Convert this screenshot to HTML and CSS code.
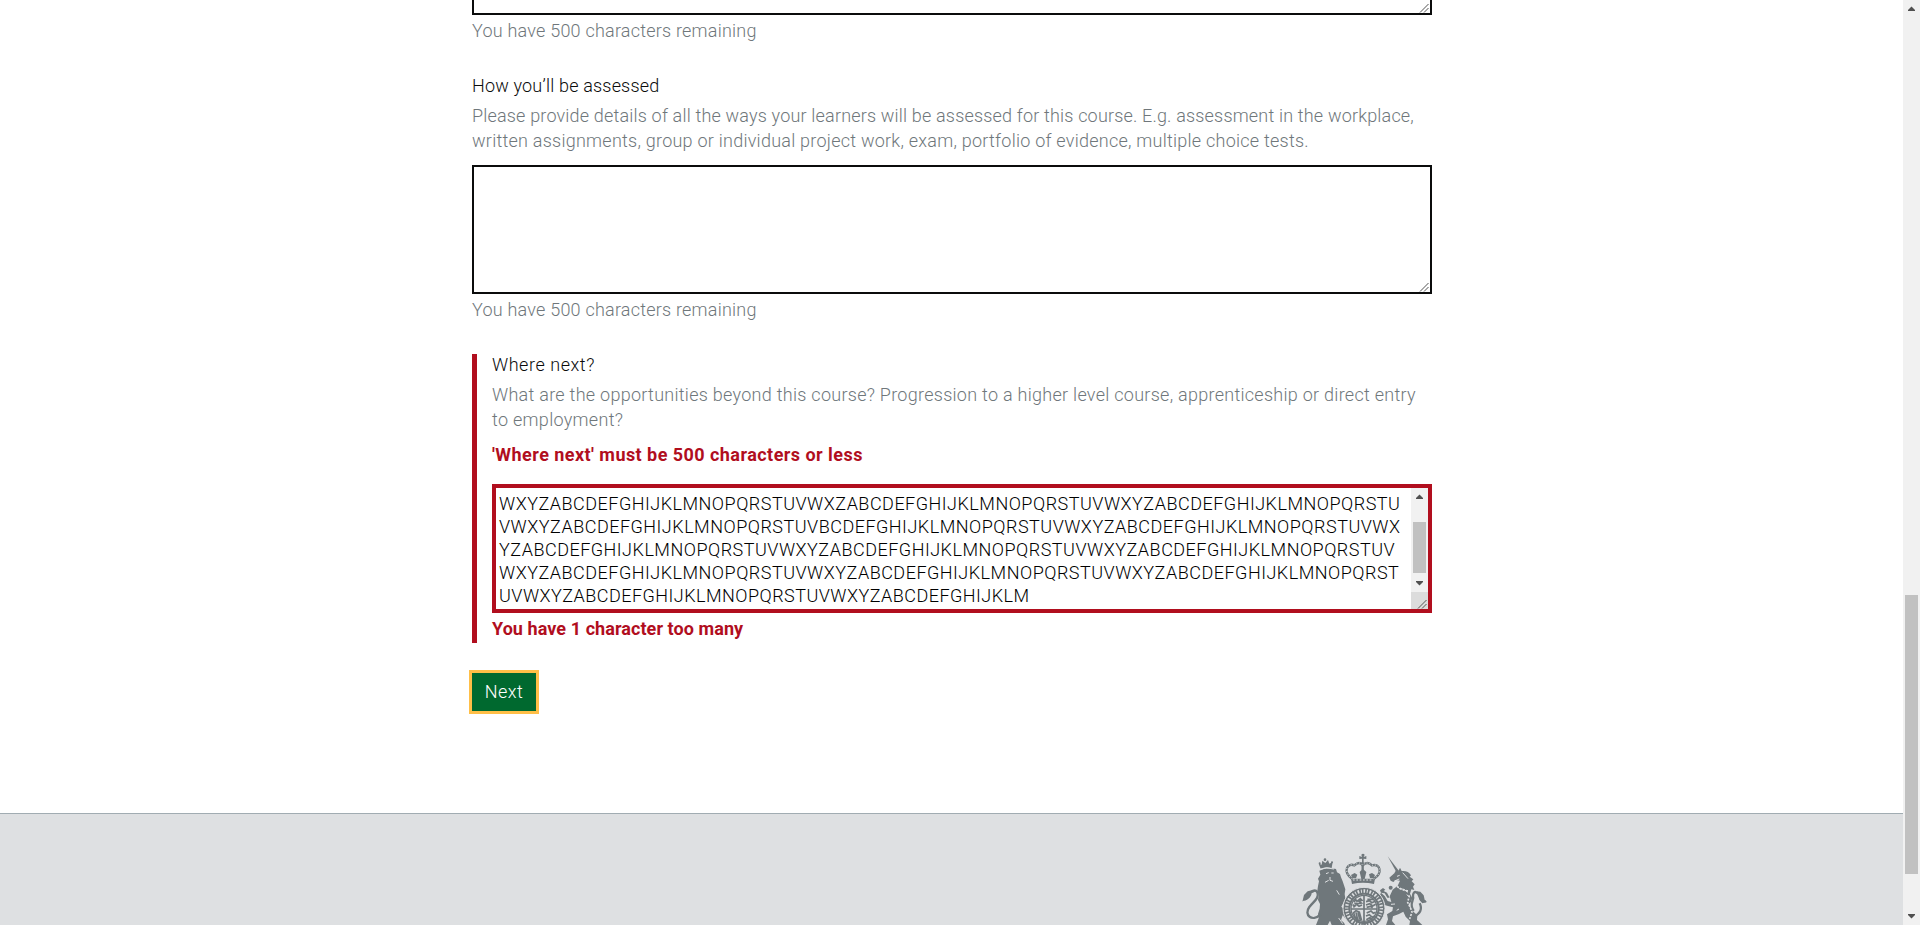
FILE: index.html
```html
<!DOCTYPE html>
<html lang="en">
<head>
<meta charset="utf-8">
<title>Course description</title>
<link rel="stylesheet" href="styles.css">
</head>
<body>
<div class="page">
  <main class="content">
    <div class="group group-first">
      <div class="textarea"><svg class="grip" viewBox="0 0 10 10"><path d="M1 9.5L9.5 1M5 9.5L9.5 5"/></svg></div>
      <p class="hint counter ls-a">You have 500 characters remaining</p>
    </div>
    <div class="group group-assess">
      <label class="label ls-b">How you’ll be assessed</label>
      <p class="hint hint-text"><span class="line ls-c1">Please provide details of all the ways your learners will be assessed for this course. E.g. assessment in the workplace,</span><span class="line ls-c2">written assignments, group or individual project work, exam, portfolio of evidence, multiple choice tests.</span></p>
      <div class="textarea"><svg class="grip" viewBox="0 0 10 10"><path d="M1 9.5L9.5 1M5 9.5L9.5 5"/></svg></div>
      <p class="hint counter ls-a">You have 500 characters remaining</p>
    </div>
    <div class="group group-error">
      <label class="label ls-d">Where next?</label>
      <p class="hint hint-text"><span class="line ls-d1">What are the opportunities beyond this course? Progression to a higher level course, apprenticeship or direct entry</span><span class="line ls-d2">to employment?</span></p>
      <p class="error ls-e">'Where next' must be 500 characters or less</p>
      <div class="textarea textarea-error">
        <div class="value">
          <span class="line">WXYZABCDEFGHIJKLMNOPQRSTUVWXZABCDEFGHIJKLMNOPQRSTUVWXYZABCDEFGHIJKLMNOPQRSTU</span>
          <span class="line">VWXYZABCDEFGHIJKLMNOPQRSTUVBCDEFGHIJKLMNOPQRSTUVWXYZABCDEFGHIJKLMNOPQRSTUVWX</span>
          <span class="line">YZABCDEFGHIJKLMNOPQRSTUVWXYZABCDEFGHIJKLMNOPQRSTUVWXYZABCDEFGHIJKLMNOPQRSTUV</span>
          <span class="line">WXYZABCDEFGHIJKLMNOPQRSTUVWXYZABCDEFGHIJKLMNOPQRSTUVWXYZABCDEFGHIJKLMNOPQRST</span>
          <span class="line ls-last">UVWXYZABCDEFGHIJKLMNOPQRSTUVWXYZABCDEFGHIJKLM</span>
        </div>
        <div class="scrollbar inner-bar">
          <svg class="arrow" viewBox="0 0 17 17"><path d="M5 11V10L8.5 6.5L12 10V11Z"/></svg>
          <div class="thumb inner-thumb"></div>
          <svg class="arrow" viewBox="0 0 17 17"><path d="M5 6V7L8.5 10.5L12 7V6Z"/></svg>
          <div class="corner"></div>
        </div>
        <svg class="grip" viewBox="0 0 10 10"><path d="M1 9.5L9.5 1M5 9.5L9.5 5"/></svg>
      </div>
      <p class="error error-counter ls-f">You have 1 character too many</p>
    </div>
    <button class="button">Next</button>
  </main>
  <footer class="footer">
    <div class="footer-inner">
      <svg class="crest" viewBox="0 0 450 255">
        <g class="solid">
          <path d="M92 86L86 71L95 74L97 62L106 69L114 60L118 71L128 66L125 84Q108 78 92 86Z"/>
          <circle cx="105" cy="59" r="4"/><circle cx="89" cy="70" r="3"/><circle cx="126" cy="67" r="3"/>
          <path d="M88 92Q111 81 138 87L141 97L150 102L153 112L158 124L162 136L166 148L164 162L166 176L160 188L154 200L164 209L173 224L182 234L179 245L168 238L158 226L153 241L162 248L165 255H125L120 242L113 255H78L86 235L84 222L89 206L90 192L84 180L86 166L82 152L84 138L87 124L84 116L91 104Z"/>
          <path d="M214 44Q219 38 224 44L221 51L229 48V57L221 56V66H216V56L208 57V48L216 51Z"/>
          <path d="M183 116H255L252 132Q219 124 186 132Z"/>
          <path d="M214 117L209 96L218 86L229 96L224 117ZM187 114L183 105L194 99L202 104L198 115ZM240 114L237 103L246 99L255 105L251 115Z"/>
          <path d="M293 49L327 93L319 96Z"/>
          <path d="M302 122L298 113L313 100L318 91L325 94L330 83L335 93Q355 91 363 106L359 110L370 118L365 124L374 133L369 140L373 150L364 148L360 161L367 174L363 186L356 192L359 202L368 213L382 226L381 240L397 255H358L360 243L347 230L340 215L327 222L309 229L306 243L316 255H288L294 238L291 223L307 213L309 202L294 198L281 194L277 177L267 170L273 158L284 168L293 183L304 186L299 169L308 149L323 137L330 122L318 120L310 126Z"/>
          <path d="M270 151L279 144L286 149L281 153L291 158L299 173L292 173L284 160L273 158Z"/>
          <circle cx="302" cy="143" r="6"/>
        </g>
        <g class="tail">
          <path d="M91 224C67 247 40 225 58 201C71 184 89 174 82 157Q76 146 62 157Q61 172 43 178"/>
          <path d="M371 213C355 190 374 180 369 168C369 151 384 153 388 169Q392 185 407 184"/>
          <path d="M371 231C391 219 398 208 389 190"/>
        </g>
        <g class="solid">
          <path d="M37 185L42 165L53 154L68 150L75 155L63 160L58 173L48 181L39 183Z"/>
          <path d="M379 154L391 155L401 166L404 179L411 186L397 190L389 181L386 168Z"/>
        </g>
        <g class="outline">
          <path d="M187 117C155 93 174 67 193 76Q209 62 218 76Q232 62 246 76C270 69 280 98 251 117"/>
          <path d="M218 66V90"/>
        </g>
        <g class="dots">
          <path d="M187 117C155 93 174 67 193 76Q209 62 218 76Q232 62 246 76C270 69 280 98 251 117"/>
        </g>
        <circle class="garter" cx="222" cy="205" r="52"/>
        <circle class="rim" cx="222" cy="205" r="63"/>
        <circle class="motto" cx="222" cy="205" r="52"/>
        <circle class="shield" cx="222" cy="205" r="39"/>
        <path class="quarter" d="M222 166V255M183 207H261"/>
        <g class="charges">
          <path d="M192 186L197 179L201 184L211 176L216 181L207 184L214 189L203 191L193 190M192 199L200 193L207 199L216 195M188 194L194 199L190 202M232 178H252M228 185L239 182L245 188L256 184M228 195L239 191L248 198L257 193M230 202L241 199L248 203M230 219L243 213L250 220L257 217M228 228L238 224L247 232L255 228M229 239L240 233L247 242M230 248L241 243"/>
          <path d="M191 218L198 212L208 216L214 239L205 244Q195 236 191 218ZM198 217L203 239M204 217L209 238"/>
        </g>
        <g class="detail">
          <path d="M90 88Q108 80 132 87M108 101L116 98M124 99L131 99M120 111V121L129 124M105 127L116 121M140 151L148 164M146 234L158 251"/>
          <path d="M321 109L329 106M313 123L328 117M317 132L328 146L342 148L354 157M338 98L354 116M350 164L359 171M303 193L315 192M320 211L327 207"/>
          <path d="M189 120H248" stroke-dasharray="5 5"/>
        </g>
        <path class="chain" d="M314 132Q330 151 356 153M358 166L353 187L361 203L366 216L359 237"/>
      </svg>
    </div>
  </footer>
</div>
<div class="scrollbar page-bar">
  <svg class="arrow" viewBox="0 0 17 17"><path d="M5 11V10L8.5 6.5L12 10V11Z"/></svg>
  <div class="thumb page-thumb"></div>
  <svg class="arrow" viewBox="0 0 17 17"><path d="M5 6V7L8.5 10.5L12 7V6Z"/></svg>
</div>
</body>
</html>
```
FILE: styles.css
```css
* { box-sizing: border-box; }
body {
  margin: 0;
  height: 925px;
  overflow: hidden;
  display: flex;
  background: #fff;
  color: #0b0c0c;
  font: 300 18px/25px Roboto, "Liberation Sans", sans-serif;
}
p { margin: 0; }
.page { flex: 1; height: 925px; display: flex; flex-direction: column; overflow: hidden; }
.content { width: 960px; height: 813px; flex: none; margin-left: 472px; }
.line { display: block; white-space: nowrap; }
.label { display: block; white-space: nowrap; }
.hint { color: #6f777b; white-space: nowrap; }
.error { color: #b10e1e; font-weight: 700; white-space: nowrap; }

.group-first { margin-top: -114px; height: 189px; }
.group-assess { height: 279px; margin-top: -2px; }
.group-error { display: flow-root; height: 289px; margin-top: 2px; padding-left: 15px; border-left: 5px solid #b10e1e; }
.group-error .label { margin-top: -2px; }
.hint-text { margin-top: 5px; }
.counter { margin-top: 3px; }
.textarea {
  position: relative;
  height: 129px;
  border: 2px solid #0b0c0c;
  background: #fff;
}
.group-assess .textarea { margin-top: 12px; }
.group-error .error { margin-top: 10px; }
.group-error .textarea-error { margin-top: 17px; border: 4px solid #b10e1e; display: flex; }
.group-error .error-counter { margin-top: 3px; }
.grip { position: absolute; right: 1px; bottom: 0; width: 10px; height: 10px; }
.grip path { fill: none; stroke: #555; stroke-width: 1; }
.value {
  flex: 1;
  padding: 4px 0 0 3px;
  overflow: hidden;
  color: #000;
  line-height: 23px;
  letter-spacing: .495px;
}

.ls-a { letter-spacing: .22px; }
.ls-b { letter-spacing: .17px; }
.ls-c1 { letter-spacing: .18px; }
.ls-c2 { letter-spacing: .245px; }
.ls-d { letter-spacing: .55px; }
.ls-d1 { letter-spacing: .275px; }
.ls-d2 { letter-spacing: .3px; }
.ls-e { letter-spacing: .45px; }
.ls-f { letter-spacing: .07px; }
.ls-last { letter-spacing: .47px; }

.button {
  display: block;
  width: 64px;
  height: 38px;
  margin-top: 30px;
  padding: 0 0 2px;
  border: 0;
  outline: 3px solid #ffbf47;
  background: #00692f;
  color: #fff;
  font: inherit;
  letter-spacing: .4px;
}
.footer { flex: 1; border-top: 1px solid #a1acb2; background: #dee0e2; }
.footer-inner { width: 960px; margin-left: 472px; padding: 26px 0 0 818px; }
.crest { display: block; width: 150px; height: 85px; }
.solid { fill: #6f777b; }
.tail { fill: none; stroke: #6f777b; stroke-width: 7; }
.outline { fill: none; stroke: #6f777b; stroke-width: 7; }
.dots { fill: none; stroke: #dee0e2; stroke-width: 3; stroke-dasharray: 3 6; }
.garter { fill: #dee0e2; stroke: #6f777b; stroke-width: 22; }
.rim { fill: none; stroke: #dee0e2; stroke-width: 3; }
.motto { fill: none; stroke: #dee0e2; stroke-width: 10; stroke-dasharray: 3 5 5 5; }
.shield { fill: #dee0e2; stroke: #6f777b; stroke-width: 4; }
.quarter { fill: none; stroke: #6f777b; stroke-width: 5; }
.charges { fill: none; stroke: #6f777b; stroke-width: 5; }
.detail { fill: none; stroke: #dee0e2; stroke-width: 3; }
.chain { fill: none; stroke: #dee0e2; stroke-width: 5; stroke-dasharray: 6 4; }

.scrollbar { width: 17px; flex: none; display: flex; flex-direction: column; background: #f1f1f1; }
.arrow { width: 17px; height: 17px; flex: none; fill: #505050; }
.thumb { width: 13px; margin-left: 2px; flex: none; background: #c1c1c1; }
.page-bar { height: 925px; justify-content: space-between; }
.page-thumb { height: 279px; margin-top: 561px; margin-bottom: 17px; }
.inner-thumb { height: 51px; margin-top: 17px; margin-bottom: 2px; }
.corner { height: 17px; background: #dcdcdc; }
```
